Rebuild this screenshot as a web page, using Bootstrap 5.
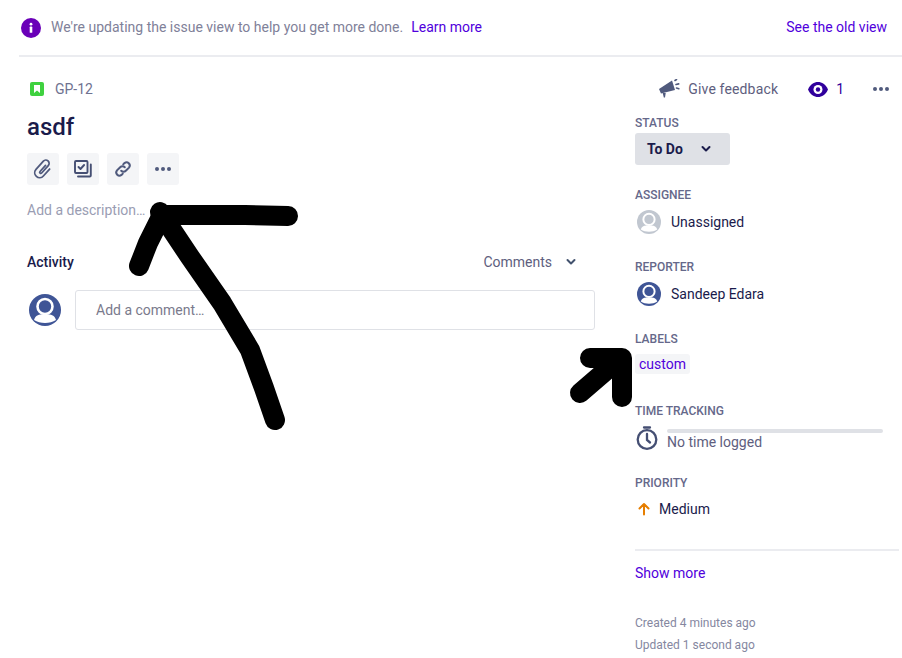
<!DOCTYPE html>
<html lang="en">
<head>
    <meta charset="UTF-8">
    <meta name="viewport" content="width=device-width, initial-scale=1.0">
    <title>GP-12 asdf</title>

    <link href="https://cdn.jsdelivr.net/npm/bootstrap@5.3.3/dist/css/bootstrap.min.css" rel="stylesheet">

    <style>
        body {
            font-family: Roboto, "Liberation Sans", sans-serif;
            font-size: 14px;
            color: #1a1b4b;
            background: #fff;
            overflow: hidden;
        }

        a { color: #5000dc; text-decoration: none; }

        .issue-page { position: relative; width: 902px; height: 658px; padding-left: 19px; }

        .update-banner { height: 57px; border-bottom: 2px solid #ebecf0; padding-right: 15px; color: #7f8199; }
        .update-banner svg { margin-left: 2px; margin-right: 10px; }
        .update-banner .learn { margin-left: 8px; }

        .issue-left { width: 576px; padding-left: 8px; }
        .issue-right { width: 264px; margin-left: 40px; }

        .issue-key { height: 32px; margin-top: 16px; padding-left: 3px; color: #6f7290; }
        .issue-key svg { margin-right: 11px; }
        .issue-title { font-size: 24px; font-weight: 500; line-height: 28px; margin: 8px 0 0; color: #1a1b4b; }

        .tool-btn { width: 32px; height: 32px; background: #f4f5f7; border-radius: 3px; }
        .tool-row { margin-top: 12px; }

        .add-desc { margin-top: 15px; color: #9a9db3; line-height: 20px; }

        .activity-head { margin-top: 30px; height: 24px; padding-right: 18px; }
        .activity-head strong { font-weight: 500; font-size: 14px; }
        .activity-filter { color: #5e5e7e; }
        .activity-filter svg { margin-left: 13px; }

        .comment-row { margin-top: 16px; }
        .comment-box { flex: 1; height: 40px; border: 1px solid #dfe1e6; border-radius: 3px; padding-left: 20px; color: #7a7a8c; margin-left: 14px; }
        .comment-avatar { margin-top: 4px; margin-left: 2px; }

        .top-actions { height: 32px; margin-top: 16px; padding-right: 9px; color: #5e5e7e; }
        .feedback-icon { margin-right: 8px; }
        .feedback-text { letter-spacing: .15px; }
        .eye-icon { margin-left: 30px; margin-right: 8px; }
        .eye-count { color: #30009c; }
        .more-icon { margin-left: 28px; }

        .side-field { height: 72px; }
        .side-field.first { margin-top: 10px; }
        .side-label { font-size: 12px; font-weight: 500; line-height: 16px; color: #65688a; }
        .status-btn { width: 95px; height: 32px; margin-top: 2px; padding-left: 12px; background: #dfe1e6; border-radius: 3px; font-weight: 700; color: #1a1b4b; }
        .status-btn svg { margin-left: 17px; }
        .side-value { height: 24px; margin-top: 7px; padding-left: 2px; }
        .side-value svg { margin-right: 10px; }
        .label-chip { display: inline-block; height: 20px; line-height: 20px; margin-top: 7px; padding: 0 4px; background: #f4f5f7; border-radius: 3px; }
        .time-wrap { height: 24px; margin-top: 7px; padding-left: 1px; }
        .time-wrap svg { margin-right: 9px; }
        .time-info { padding-right: 16px; }
        .time-bar { height: 4px; background: #dfe1e6; border-radius: 2px; margin-top: 3px; }
        .time-text { color: #5e5e7e; line-height: 16px; margin-top: 1px; }
        .priority-row { height: 24px; margin-top: 6px; padding-left: 2px; }
        .priority-row svg { margin-right: 8px; }

        .side-rule { height: 2px; background: #ebecf0; margin-top: 2px; }
        .show-more { display: block; margin-top: 12px; line-height: 20px; }
        .stamps { margin-top: 29px; font-size: 12px; color: #85879f; line-height: 22px; }

        .scribble { position: absolute; left: 0; top: 0; pointer-events: none; }
    </style>
</head>
<body>
    <div class="issue-page">
        <div class="update-banner d-flex align-items-center">
            <svg width="20" height="20" viewBox="0 0 20 20"><circle cx="10" cy="10" r="10" fill="#6a00b8"/><rect x="8.7" y="8.6" width="2.6" height="6.2" rx=".6" fill="#fff"/><circle cx="10" cy="6.2" r="1.4" fill="#fff"/></svg>
            <span>We're updating the issue view to help you get more done.</span>
            <a class="learn" href="#">Learn more</a>
            <a class="ms-auto" href="#">See the old view</a>
        </div>

        <div class="d-flex">
            <div class="issue-left">
                <div class="issue-key d-flex align-items-center">
                    <svg width="14" height="14" viewBox="0 0 14 14"><rect width="14" height="14" rx="2" fill="#3fd13f"/><path d="M4 3h6v8L7 8.6 4 11z" fill="#fff"/></svg>
                    <span>GP-12</span>
                </div>
                <h1 class="issue-title">asdf</h1>
                <div class="tool-row d-flex gap-2">
                    <div class="tool-btn d-flex align-items-center justify-content-center">
                        <svg width="22" height="22" viewBox="0 0 20 20" fill="none" stroke="#505a7d" stroke-width="1.6" stroke-linecap="round"><path transform="rotate(42 10 10)" d="M14.5 6v8.500a4.500 4.500 0 0 1-9 0v-10a3 3 0 0 1 6 0v9a1 1 0 0 1-2 0V6"/></svg>
                    </div>
                    <div class="tool-btn d-flex align-items-center justify-content-center">
                        <svg width="20" height="20" viewBox="0 0 20 20" fill="none" stroke="#454f73" stroke-width="1.9" stroke-linecap="round" stroke-linejoin="round"><rect x="2" y="2" width="12.5" height="12" rx="1"/><path d="m5.500 8 2 2 3.600-4"/><path d="M17.800 5.500v11a1 1 0 0 1-1 1H5"/></svg>
                    </div>
                    <div class="tool-btn d-flex align-items-center justify-content-center">
                        <svg width="20" height="20" viewBox="0 0 20 20" fill="none" stroke="#505a7d" stroke-width="2" stroke-linecap="round"><path d="M8.200 11.800a3.200 3.200 0 0 0 4.600 0l3.200-3.200a3.200 3.200 0 0 0-4.500-4.500L10.200 5.400"/><path d="M11.800 8.200a3.200 3.200 0 0 0-4.600 0L4 11.400a3.200 3.200 0 0 0 4.500 4.500l1.300-1.300"/></svg>
                    </div>
                    <div class="tool-btn d-flex align-items-center justify-content-center">
                        <svg width="18" height="6" viewBox="0 0 18 6" fill="#505a7d"><circle cx="3" cy="3" r="2"/><circle cx="9" cy="3" r="2"/><circle cx="15" cy="3" r="2"/></svg>
                    </div>
                </div>
                <div class="add-desc">Add a description…</div>
                <div class="activity-head d-flex align-items-center justify-content-between">
                    <strong>Activity</strong>
                    <span class="activity-filter d-flex align-items-center">Comments
                        <svg width="12" height="8" viewBox="0 0 12 8" fill="none" stroke="#42526e" stroke-width="2" stroke-linecap="round" stroke-linejoin="round"><path d="m2.500 2 3.500 3.500L9.500 2"/></svg>
                    </span>
                </div>
                <div class="comment-row d-flex align-items-start">
                    <svg class="comment-avatar" width="32" height="32" viewBox="0 0 32 32"><circle cx="16" cy="16" r="16" fill="#3f5596"/><circle cx="16" cy="12.500" r="7.500" fill="none" stroke="#fff" stroke-width="2.600"/><path d="M5 26c1-3.800 4-5.500 7.500-5.500h7c3.500 0 6.500 1.700 7.500 5.500-3 2-7 3-11 3s-8-1-11-3z" fill="#fff"/></svg>
                    <div class="comment-box d-flex align-items-center">Add a comment…</div>
                </div>
            </div>

            <div class="issue-right">
                <div class="top-actions d-flex align-items-center justify-content-end">
                    <svg class="feedback-icon" width="22" height="20" viewBox="0 0 22 20"><path d="M1 10 14 1.500 17 11 3 14.500z" fill="#505a7d"/><path d="M4.700 14h3l-.7 4.500H5.800z" fill="#505a7d"/><path d="M17 1.500 18.500.5M18 5.500l2.700-.6M18.500 9l2.300.7" stroke="#505a7d" stroke-width="1.600" stroke-linecap="round"/></svg>
                    <span class="feedback-text">Give feedback</span>
                    <svg class="eye-icon" width="20" height="15" viewBox="0 0 20 15"><path d="M0 7.500C2.500 2 6 0 10 0s7.500 2 10 7.500c-2.500 5.500-6 7.500-10 7.500S2.500 13 0 7.500z" fill="#30009c"/><circle cx="10" cy="7.500" r="4.500" fill="#fff"/><circle cx="10" cy="7.500" r="2.200" fill="#30009c"/></svg>
                    <span class="eye-count">1</span>
                    <svg class="more-icon" width="18" height="6" viewBox="0 0 18 6" fill="#505a7d"><circle cx="3" cy="3" r="2"/><circle cx="9" cy="3" r="2"/><circle cx="15" cy="3" r="2"/></svg>
                </div>

                <div class="side-field first">
                    <div class="side-label">STATUS</div>
                    <div class="status-btn d-flex align-items-center">To Do
                        <svg width="12" height="8" viewBox="0 0 12 8" fill="none" stroke="#1a1b4b" stroke-width="2" stroke-linecap="round" stroke-linejoin="round"><path d="m2.500 2 3.500 3.500L9.500 2"/></svg>
                    </div>
                </div>

                <div class="side-field">
                    <div class="side-label">ASSIGNEE</div>
                    <div class="side-value d-flex align-items-center">
                        <svg width="24" height="24" viewBox="0 0 32 32"><circle cx="16" cy="16" r="16" fill="#c1c7d0"/><circle cx="16" cy="12.500" r="7.500" fill="none" stroke="#fff" stroke-width="2.600"/><path d="M5 26c1-3.800 4-5.500 7.500-5.500h7c3.500 0 6.500 1.700 7.500 5.500-3 2-7 3-11 3s-8-1-11-3z" fill="#fff"/></svg>
                        <span>Unassigned</span>
                    </div>
                </div>

                <div class="side-field">
                    <div class="side-label">REPORTER</div>
                    <div class="side-value d-flex align-items-center">
                        <svg width="24" height="24" viewBox="0 0 32 32"><circle cx="16" cy="16" r="16" fill="#3f5596"/><circle cx="16" cy="12.500" r="7.500" fill="none" stroke="#fff" stroke-width="2.600"/><path d="M5 26c1-3.800 4-5.500 7.500-5.500h7c3.500 0 6.500 1.700 7.500 5.500-3 2-7 3-11 3s-8-1-11-3z" fill="#fff"/></svg>
                        <span>Sandeep Edara</span>
                    </div>
                </div>

                <div class="side-field">
                    <div class="side-label">LABELS</div>
                    <a class="label-chip" href="#">custom</a>
                </div>

                <div class="side-field">
                    <div class="side-label">TIME TRACKING</div>
                    <div class="time-wrap d-flex">
                        <svg width="22" height="24" viewBox="0 0 22 24" fill="none" stroke="#454f73" stroke-width="2.300" stroke-linecap="round"><circle cx="11" cy="13.500" r="9.300"/><path d="M8 1.500h6M11 8v6l3 2.500"/></svg>
                        <div class="time-info flex-grow-1">
                            <div class="time-bar"></div>
                            <div class="time-text">No time logged</div>
                        </div>
                    </div>
                </div>

                <div class="side-field">
                    <div class="side-label">PRIORITY</div>
                    <div class="priority-row d-flex align-items-center">
                        <svg width="14" height="14" viewBox="0 0 14 14" fill="none" stroke="#e67e00" stroke-width="2" stroke-linecap="round" stroke-linejoin="round"><path d="M7 12.500V2M2.500 6.500 7 2l4.500 4.500"/></svg>
                        <span>Medium</span>
                    </div>
                </div>

                <div class="side-rule"></div>
                <a class="show-more" href="#">Show more</a>
                <div class="stamps">
                    <div>Created 4 minutes ago</div>
                    <div>Updated 1 second ago</div>
                </div>
            </div>
        </div>

        <!-- hand drawn arrows on top of the screenshot -->
        <svg class="scribble" width="902" height="658" viewBox="0 0 902 658" fill="none" stroke="#000" stroke-width="20" stroke-linecap="round" stroke-linejoin="round">
            <path d="M288 216 245 215H162L148 243 139 266"/>
            <path d="M160 212 190 257 222 303 250 350 264 388 275 420"/>
            <path d="M590 358H622V397"/>
            <path d="M616 362 580 393"/>
        </svg>
    </div>

    <script src="https://cdn.jsdelivr.net/npm/bootstrap@5.3.3/dist/js/bootstrap.bundle.min.js"></script>
</body>
</html>
